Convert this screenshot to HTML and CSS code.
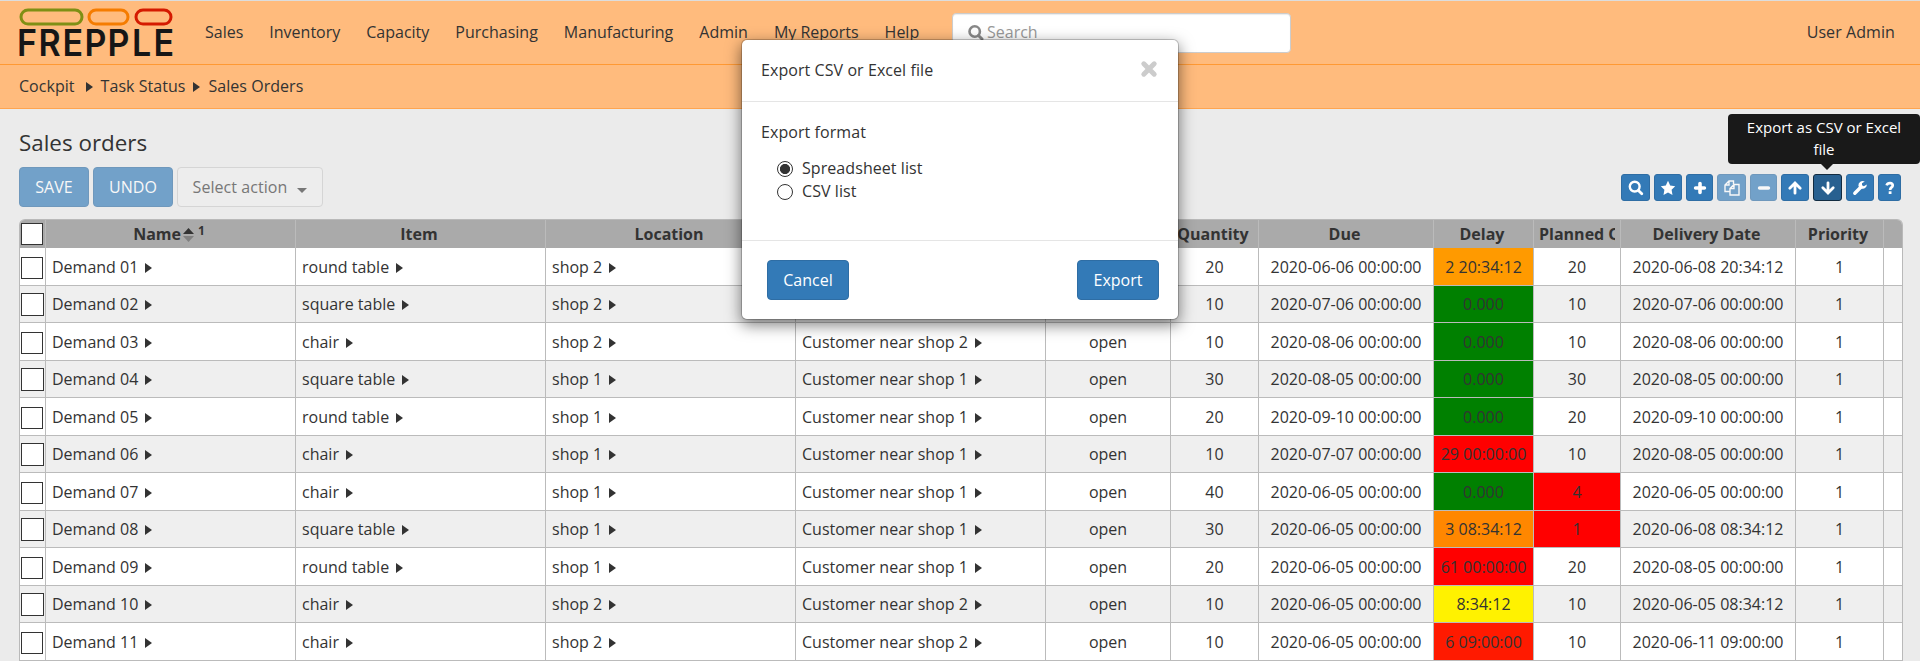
FILE: index.html
```html
<!DOCTYPE html>
<html lang="en">
<head>
<meta charset="utf-8">
<title>Sales orders</title>
<link rel="stylesheet" href="styles.css">
</head>
<body>
<header class="navbar">
  <svg class="logo" width="155" height="52" viewBox="0 0 155 52">
    <rect x="2" y="2" width="61" height="14" rx="7" fill="none" stroke="#7f8f14" stroke-width="3"/>
    <rect x="70" y="2" width="39" height="14" rx="7" fill="none" stroke="#f57c00" stroke-width="3"/>
    <rect x="117" y="2" width="35" height="14" rx="7" fill="none" stroke="#d51a00" stroke-width="3"/>
    <text class="logo-text" transform="scale(.92 1)" x="-2.3 21.1 47.2 71.1 96.1 122.7 146.1" y="48.500">FREPPLE</text>
  </svg>
  <nav class="menu">
    <a>Sales</a><a>Inventory</a><a>Capacity</a><a>Purchasing</a><a>Manufacturing</a><a>Admin</a><a>My Reports</a><a>Help</a>
  </nav>
  <div class="search">
    <svg width="16" height="16" viewBox="0 0 16 16"><circle cx="6.7" cy="6.5" r="5.2" fill="none" stroke="#888" stroke-width="2.6"/><path d="M10.5 10.5L14 14" stroke="#888" stroke-width="3" stroke-linecap="round"/></svg>
    <span>Search</span>
  </div>
  <span class="user">User Admin</span>
</header>
<div class="crumbs"><span>Cockpit</span><i class="caret c1"></i><span>Task Status</span><i class="caret c2"></i><span>Sales Orders</span></div>

<main class="content">
  <h1>Sales orders</h1>
  <div class="toolbar">
    <button class="btn faded save">SAVE</button>
    <button class="btn faded undo">UNDO</button>
    <button class="btn select">Select action<i class="down"></i></button>
    <div class="tools">
      <button class="tool w29"><svg width="16" height="16" viewBox="0 0 16 16"><circle cx="6.7" cy="6.6" r="4.9" fill="none" stroke="#fff" stroke-width="2.4"/><path d="M10.4 10.4L13.8 13.8" stroke="#fff" stroke-width="2.8" stroke-linecap="round"/></svg></button>
      <button class="tool w28"><svg width="16" height="16" viewBox="0 0 16 16"><path fill="#fff" d="M8 .8l2.2 4.7 5 .7-3.6 3.6.9 5.1L8 12.5l-4.500 2.400.9-5.100L.8 6.200l5-.7z"/></svg></button>
      <button class="tool w27"><svg width="16" height="16" viewBox="0 0 16 16"><path stroke="#fff" stroke-width="3.6" stroke-linecap="round" d="M8 3.600v8.800M3.600 8h8.800"/></svg></button>
      <button class="tool w29 faded"><svg width="16" height="16" viewBox="0 0 16 16"><path fill="none" stroke="#fff" stroke-width="1.400" d="M6 11.500H1V5l4-4h4.500v3M5 1v4H1M10 4.500h5V15H6V8.500zM10 4.500v4H6"/></svg></button>
      <button class="tool w27 faded"><svg width="16" height="16" viewBox="0 0 16 16"><path stroke="#fff" stroke-width="3.600" stroke-linecap="round" d="M3.600 8h8.800"/></svg></button>
      <button class="tool w28"><svg width="16" height="16" viewBox="0 0 16 16"><path fill="none" stroke="#fff" stroke-width="2.800" stroke-linecap="round" d="M8 13.200V3.500M2.800 8.300L8 3.100l5.200 5.200"/></svg></button>
      <div class="tip-anchor">
        <button class="tool w29 active"><svg width="16" height="16" viewBox="0 0 16 16"><path fill="none" stroke="#fff" stroke-width="2.800" stroke-linecap="round" d="M8 2.800v9.700M2.800 7.700L8 12.900l5.200-5.200"/></svg></button>
        <div class="tooltip">Export as CSV or Excel file</div>
      </div>
      <button class="tool w28"><svg width="16" height="16" viewBox="0 0 16 16"><path stroke="#fff" stroke-width="3.400" stroke-linecap="round" d="M2.800 13.200L9 7"/><path fill="#fff" d="M14.800 4.500a4.300 4.300 0 0 1-8.400 1.200A4.300 4.300 0 0 1 12.800 1.500L10 3.200v2l1.800 1z"/></svg></button>
      <button class="tool w23"><svg width="12" height="16" viewBox="0 0 12 16"><path fill="none" stroke="#fff" stroke-width="2.700" d="M2.600 5.400C3.800 2 9 2.500 8.700 5.500 8.500 7.600 6.100 7.300 6.100 10"/><path fill="#fff" d="M4.700 11.300h2.800V14H4.700z"/></svg></button>
    </div>
  </div>

  <div class="grid">
  <table>
    <colgroup><col class="k26"><col class="k250"><col class="k250"><col class="k250"><col class="k250"><col class="k125"><col class="k88"><col class="k175"><col class="k100"><col class="k87"><col class="k175"><col class="k88"><col class="k19"></colgroup>
    <thead><tr><th><i class="box"></i></th><th class="name">Name<svg class="sort" width="11" height="14" viewBox="0 0 11 14"><path fill="#333" d="M0 6L5.500 0 11 6z"/><path fill="#808080" d="M0 8h11L5.500 14z"/></svg><sup>1</sup></th><th>Item</th><th>Location</th><th>Customer</th><th>Status</th><th>Quantity</th><th>Due</th><th>Delay</th><th class="clip"><div>Planned Quantity</div></th><th>Delivery Date</th><th>Priority</th><th></th></tr></thead>
    <tbody>
    <tr><td><i class="box"></i></td><td>Demand 01<i class="caret"></i></td><td>round table<i class="caret"></i></td><td>shop 2<i class="caret"></i></td><td>Customer near shop 2<i class="caret"></i></td><td>open</td><td>20</td><td>2020-06-06 00:00:00</td><td class="amber">2 20:34:12</td><td>20</td><td>2020-06-08 20:34:12</td><td>1</td><td></td></tr>
    <tr><td><i class="box"></i></td><td>Demand 02<i class="caret"></i></td><td>square table<i class="caret"></i></td><td>shop 2<i class="caret"></i></td><td>Customer near shop 2<i class="caret"></i></td><td>open</td><td>10</td><td>2020-07-06 00:00:00</td><td class="green">0.000</td><td>10</td><td>2020-07-06 00:00:00</td><td>1</td><td></td></tr>
    <tr><td><i class="box"></i></td><td>Demand 03<i class="caret"></i></td><td>chair<i class="caret"></i></td><td>shop 2<i class="caret"></i></td><td>Customer near shop 2<i class="caret"></i></td><td>open</td><td>10</td><td>2020-08-06 00:00:00</td><td class="green">0.000</td><td>10</td><td>2020-08-06 00:00:00</td><td>1</td><td></td></tr>
    <tr><td><i class="box"></i></td><td>Demand 04<i class="caret"></i></td><td>square table<i class="caret"></i></td><td>shop 1<i class="caret"></i></td><td>Customer near shop 1<i class="caret"></i></td><td>open</td><td>30</td><td>2020-08-05 00:00:00</td><td class="green">0.000</td><td>30</td><td>2020-08-05 00:00:00</td><td>1</td><td></td></tr>
    <tr><td><i class="box"></i></td><td>Demand 05<i class="caret"></i></td><td>round table<i class="caret"></i></td><td>shop 1<i class="caret"></i></td><td>Customer near shop 1<i class="caret"></i></td><td>open</td><td>20</td><td>2020-09-10 00:00:00</td><td class="green">0.000</td><td>20</td><td>2020-09-10 00:00:00</td><td>1</td><td></td></tr>
    <tr><td><i class="box"></i></td><td>Demand 06<i class="caret"></i></td><td>chair<i class="caret"></i></td><td>shop 1<i class="caret"></i></td><td>Customer near shop 1<i class="caret"></i></td><td>open</td><td>10</td><td>2020-07-07 00:00:00</td><td class="red">29 00:00:00</td><td>10</td><td>2020-08-05 00:00:00</td><td>1</td><td></td></tr>
    <tr><td><i class="box"></i></td><td>Demand 07<i class="caret"></i></td><td>chair<i class="caret"></i></td><td>shop 1<i class="caret"></i></td><td>Customer near shop 1<i class="caret"></i></td><td>open</td><td>40</td><td>2020-06-05 00:00:00</td><td class="green">0.000</td><td class="red">4</td><td>2020-06-05 00:00:00</td><td>1</td><td></td></tr>
    <tr><td><i class="box"></i></td><td>Demand 08<i class="caret"></i></td><td>square table<i class="caret"></i></td><td>shop 1<i class="caret"></i></td><td>Customer near shop 1<i class="caret"></i></td><td>open</td><td>30</td><td>2020-06-05 00:00:00</td><td class="orange">3 08:34:12</td><td class="red">1</td><td>2020-06-08 08:34:12</td><td>1</td><td></td></tr>
    <tr><td><i class="box"></i></td><td>Demand 09<i class="caret"></i></td><td>round table<i class="caret"></i></td><td>shop 1<i class="caret"></i></td><td>Customer near shop 1<i class="caret"></i></td><td>open</td><td>20</td><td>2020-06-05 00:00:00</td><td class="red">61 00:00:00</td><td>20</td><td>2020-08-05 00:00:00</td><td>1</td><td></td></tr>
    <tr><td><i class="box"></i></td><td>Demand 10<i class="caret"></i></td><td>chair<i class="caret"></i></td><td>shop 2<i class="caret"></i></td><td>Customer near shop 2<i class="caret"></i></td><td>open</td><td>10</td><td>2020-06-05 00:00:00</td><td class="yellow">8:34:12</td><td>10</td><td>2020-06-05 08:34:12</td><td>1</td><td></td></tr>
    <tr><td><i class="box"></i></td><td>Demand 11<i class="caret"></i></td><td>chair<i class="caret"></i></td><td>shop 2<i class="caret"></i></td><td>Customer near shop 2<i class="caret"></i></td><td>open</td><td>10</td><td>2020-06-05 00:00:00</td><td class="scarlet">6 09:00:00</td><td>10</td><td>2020-06-11 09:00:00</td><td>1</td><td></td></tr>
    </tbody>
  </table>
  </div>
</main>

<section class="modal">
  <div class="modal-head">
    <span>Export CSV or Excel file</span>
    <svg width="18" height="18" viewBox="0 0 18 18"><path stroke="#ccc" stroke-width="5" stroke-linecap="round" d="M3.800 3.800l10.400 10.400M14.200 3.800L3.800 14.200"/></svg>
  </div>
  <div class="modal-body">
    <div>Export format</div>
    <div class="options">
      <label><i class="radio on"></i>Spreadsheet list</label>
      <label><i class="radio"></i>CSV list</label>
    </div>
  </div>
  <div class="modal-foot">
    <button class="btn">Cancel</button>
    <button class="btn">Export</button>
  </div>
</section>
</body>
</html>
```
FILE: styles.css
```css
* { box-sizing: border-box; }
body {
  margin: 0;
  height: 661px;
  overflow: hidden;
  background: #ebebeb;
  color: #333;
  font: 16px/23px "Open Sans", "Noto Sans", sans-serif;
}
button { font: inherit; }

.navbar {
  display: flex;
  align-items: center;
  height: 65px;
  padding: 0 25px 0 19px;
  border-top: 1px solid #ddd;
  border-bottom: 1px solid #ff9933;
  background: #ffbb7d;
}
.logo { flex: none; margin-top: 2px; overflow: visible; }
.logo-text { font: 600 37px Inter, sans-serif; fill: #161616; }
.menu { display: flex; gap: 26px; width: 747px; margin-left: 31px; }
.menu a { white-space: nowrap; }
.search {
  display: flex;
  align-items: center;
  gap: 3px;
  width: 339px;
  height: 40px;
  padding-left: 15px;
  border: 1px solid #ccc;
  border-radius: 4px;
  background: #fff;
  box-shadow: inset 0 1px 1px rgba(0,0,0,.08);
  color: #999;
}
.user { margin-left: auto; letter-spacing: .08px; }

.crumbs {
  display: flex;
  align-items: center;
  height: 44px;
  padding: 0 19px;
  border-bottom: 1px solid #ffa550;
  background: #ffbb7d;
  letter-spacing: .04px;
}
.caret {
  display: inline-block;
  width: 0;
  height: 0;
  margin-left: 7px;
  border: 5.5px solid transparent;
  border-left: 7px solid #333;
  border-right: 0;
}
.caret.c1 { margin: 0 8px 0 11px; }
.caret.c2 { margin: 0 8px 0 8px; }

.content { padding: 0 17px 0 19px; }
h1 { margin: 19px 0 9px; font-size: 22.4px; font-weight: 400; line-height: 30px; }
.toolbar { display: flex; align-items: center; gap: 4px; height: 40px; }
.btn {
  height: 40px;
  padding: 0;
  border: 1px solid #2e6da4;
  border-radius: 4px;
  background: #337ab7;
  color: #fff;
}
.faded { opacity: .65; }
.save { width: 70px; }
.undo { width: 80px; }
.select {
  width: 146px;
  border-color: #d5d5d5;
  background: #ededed;
  color: #777;
  letter-spacing: .06px;
}
.down {
  display: inline-block;
  margin-left: 10px;
  border: 5px solid transparent;
  border-top-color: #777;
  border-bottom: 0;
}
.tools { display: flex; gap: 4px; margin: 1px 2px 0 auto; }
.tool {
  display: flex;
  align-items: center;
  justify-content: center;
  height: 27px;
  padding: 0;
  border: 1px solid #2e6da4;
  border-radius: 3px;
  background: #337ab7;
}
.tool.active { border-color: #122b40; background: #286090; }
.w29 { width: 29px; }
.w28 { width: 28px; }
.w27 { width: 27px; }
.w23 { width: 23px; }
.tip-anchor { position: relative; }
.tooltip {
  position: absolute;
  bottom: 37px;
  left: -85px;
  width: 192px;
  height: 50px;
  padding: 2px 8px;
  border-radius: 4px;
  background: #191919;
  color: #fff;
  font-size: 15px;
  line-height: 22px;
  text-align: center;
}
.tooltip::after {
  content: "";
  position: absolute;
  top: 50px;
  left: 93px;
  border: 6px solid transparent;
  border-top-color: #191919;
  border-bottom: 0;
}

.grid {
  margin-top: 12px;
  border: 1px solid #b9b9b9;
  border-bottom: 0;
  border-radius: 6px 6px 0 0;
  overflow: hidden;
}
table { width: 1883px; table-layout: fixed; border-collapse: separate; border-spacing: 0; }
.k26 { width: 26px; }
.k250 { width: 250px; }
.k125 { width: 125px; }
.k100 { width: 100px; }
.k175 { width: 175px; }
.k88 { width: 88px; }
.k87 { width: 87px; }
.k19 { width: 19px; }
th {
  height: 28px;
  padding: 0 3px 0 0;
  border-right: 1px solid #bbb;
  background: #aaa;
  line-height: 24px;
  white-space: nowrap;
}
th.clip div { width: 76px; overflow: hidden; text-align: left; margin-left: 5px; }
th sup { margin-left: 4px; font-size: 12px; line-height: 0; vertical-align: 5px; }
.sort { margin-left: 2px; vertical-align: -2px; }
td {
  height: 38px;
  padding: 1px 0 0;
  border-right: 1px solid #bbb;
  border-bottom: 1px solid #bbb;
  background: #fff;
  text-align: center;
  white-space: nowrap;
}
tr:nth-child(even) td { height: 37px; padding-top: 0; background: #efefef; }
td:nth-child(n+2):nth-child(-n+5) { padding-left: 6px; text-align: left; }
th:last-child, td:last-child { border-right: 0; }
.box {
  display: block;
  width: 22px;
  height: 22px;
  margin: 1px 0 0 1px;
  border: 1px solid #333;
  background: #fff;
}
th .box { margin-top: 0; }
tr:nth-child(even) .box { width: 23px; height: 23px; }
tbody tr td.amber { background: #ff9a00; }
tbody tr td.orange { background: #ff8700; }
tbody tr td.green { background: #008000; }
tbody tr td.red { background: #f00; }
tbody tr td.scarlet { background: #ff1a00; }
tbody tr td.yellow { background: #fff200; }

.modal {
  position: absolute;
  top: 39px;
  left: 741px;
  width: 438px;
  height: 281px;
  border: 1px solid rgba(0,0,0,.2);
  border-radius: 6px;
  background: #fff;
  background-clip: padding-box;
  box-shadow: 0 5px 15px rgba(0,0,0,.5);
  letter-spacing: .07px;
}
.modal-head {
  display: flex;
  justify-content: space-between;
  height: 62px;
  padding: 19px 20px 0 19px;
  border-bottom: 1px solid #e5e5e5;
}
.modal-head svg { margin-top: 1px; }
.modal-body { height: 138px; padding: 19px; }
.options { display: flex; flex-direction: column; margin: 13px 0 0 16px; }
.options label { display: flex; align-items: center; gap: 9px; }
.radio {
  width: 16px;
  height: 16px;
  margin-top: 1px;
  border: 1px solid #333;
  border-radius: 50%;
  background: #fff;
}
.radio.on { background: radial-gradient(circle, #333 4.7px, #fff 5.4px); }
.modal-foot {
  display: flex;
  justify-content: space-between;
  padding: 19px 19px 0 25px;
  border-top: 1px solid #e5e5e5;
}
.modal-foot .btn { width: 82px; }
```
